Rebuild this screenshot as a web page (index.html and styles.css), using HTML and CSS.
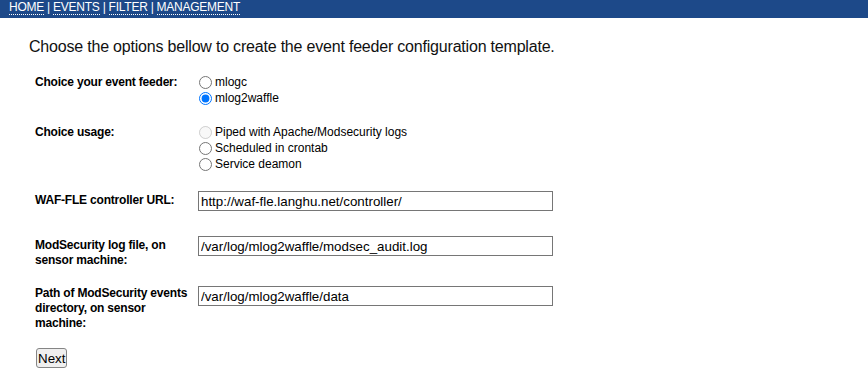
FILE: index.html
```html
<!DOCTYPE html>
<html lang="en">
<head>
    <meta charset="UTF-8">
    <meta name="viewport" content="width=device-width, initial-scale=1.0">
    <title>Event feeder</title>
    <link rel="stylesheet" href="styles.css">
</head>
<body>

<div class="topmenu">
    <a href="#">HOME</a> | <a href="#">EVENTS</a> | <a href="#">FILTER</a> | <a href="#">MANAGEMENT</a>
</div>

<div class="content">
    <h2>Choose the options bellow to create the event feeder configuration template.</h2>

    <form action="#" method="post">
        <div class="form-row">
            <div class="label">Choice your event feeder:</div>
            <div class="options">
                <label class="option"><input type="radio" name="feeder" value="mlogc">mlogc</label>
                <label class="option"><input type="radio" name="feeder" value="mlog2waffle" checked>mlog2waffle</label>
            </div>
        </div>

        <div class="form-row usage">
            <div class="label">Choice usage:</div>
            <div class="options">
                <label class="option"><input type="radio" name="usage" value="piped" disabled>Piped with Apache/Modsecurity logs</label>
                <label class="option"><input type="radio" name="usage" value="crontab">Scheduled in crontab</label>
                <label class="option"><input type="radio" name="usage" value="daemon">Service deamon</label>
            </div>
        </div>

        <div class="form-row url">
            <div class="label">WAF-FLE controller URL:</div>
            <div><input type="text" name="controller" value="http://waf-fle.langhu.net/controller/"></div>
        </div>

        <div class="form-row logfile">
            <div class="label">ModSecurity log file, on sensor machine:</div>
            <div><input type="text" name="logfile" value="/var/log/mlog2waffle/modsec_audit.log"></div>
        </div>

        <div class="form-row datadir">
            <div class="label">Path of ModSecurity events directory, on sensor machine:</div>
            <div><input type="text" name="datadir" value="/var/log/mlog2waffle/data"></div>
        </div>

        <button type="submit" class="next">Next</button>
    </form>
</div>

</body>
</html>
```

FILE: styles.css
```css
body {
    font-family: "Liberation Sans", Arial, sans-serif;
    color: #000;
    background-color: #fff;
    margin: 0;
}

.topmenu {
    height: 18px;
    box-sizing: border-box;
    padding: 0 9px;
    background-color: #1d4989;
    color: #fff;
    font-size: 12px;
    line-height: 14px;
    letter-spacing: -0.25px;
}

.topmenu a {
    color: #fff;
    text-decoration: none;
    border-bottom: 1px dotted #fff;
}

.content {
    padding-left: 29px;
}

h2 {
    font-size: 16px;
    font-weight: normal;
    line-height: 18px;
    letter-spacing: -0.2px;
    margin: 20px 0 18px 0;
    color: #111;
}

form {
    margin-left: 6px;
}

.form-row {
    display: grid;
    grid-template-columns: 163px 360px;
    font-size: 12px;
}

.label {
    font-weight: bold;
    line-height: 16px;
    letter-spacing: -0.2px;
}

.option {
    display: flex;
    align-items: center;
    height: 16px;
}

.option input {
    width: 13px;
    height: 13px;
    margin: 0 3px 0 1px;
}

.usage {
    margin-top: 18px;
}

.url {
    margin-top: 19px;
}

.logfile {
    margin-top: 25px;
}

.datadir {
    margin-top: 18px;
}

.url .label,
.logfile .label {
    line-height: 15px;
    padding-top: 2px;
}

.datadir .label {
    line-height: 15px;
}

input[type="text"] {
    width: 355px;
    height: 20px;
    box-sizing: border-box;
    padding: 1px 2px;
    border: 1px solid #767676;
    font-family: "Liberation Sans", Arial, sans-serif;
    font-size: 13.33px;
    color: #000;
}

.next {
    margin-top: 17px;
    margin-left: 1px;
    height: 20px;
    padding: 0 1px;
    border: 1px solid #858585;
    border-radius: 3px;
    background-color: #efefef;
    font-family: "Liberation Sans", Arial, sans-serif;
    font-size: 13.33px;
    color: #000;
}
```
